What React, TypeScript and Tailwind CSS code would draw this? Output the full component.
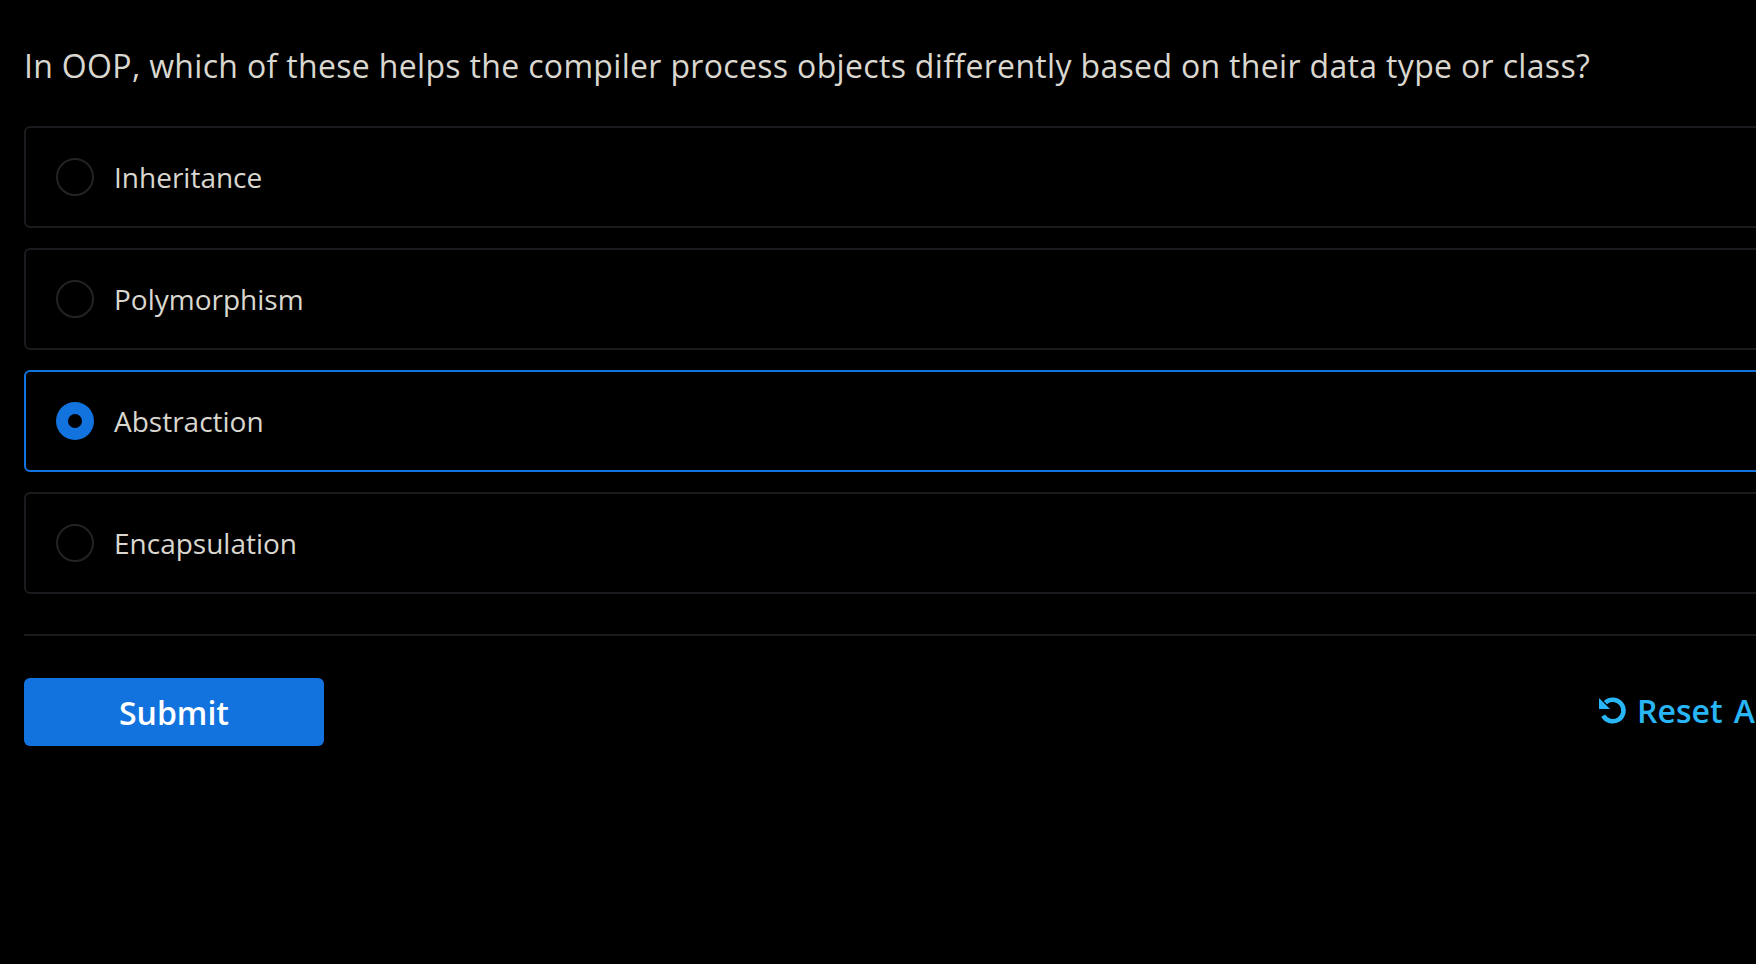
import React from "react";

const options = ["Inheritance", "Polymorphism", "Abstraction", "Encapsulation"];

export default function App() {
  return (
    <div className="h-[964px] w-[1756px] overflow-hidden bg-black font-['Open_Sans',sans-serif]">
      <div className="w-[1900px] pl-6 pr-6 pt-[44px]">
        <p className="text-[32px] leading-[44px] tracking-[0.33px] text-[#d9d7cf]">
          In OOP, which of these helps the compiler process objects differently based on their data type or class?
        </p>
        <div className="mt-[38px] flex flex-col gap-5">
          {options.map((o, i) => {
            const selected = i === 2;
            return (
              <div
                key={o}
                className={`flex h-[102px] items-center rounded-md border-2 pl-[30px] ${selected ? "border-[#1273de]" : "border-[#191b1e]"}`}
              >
                {selected ? (
                  <span className="flex h-[38px] w-[38px] items-center justify-center rounded-full bg-[#1273de]">
                    <span className="h-[14px] w-[14px] rounded-full bg-black" />
                  </span>
                ) : (
                  <span className="h-[38px] w-[38px] rounded-full border-2 border-[#232323]" />
                )}
                <span className="ml-5 text-[28px] leading-[38px] text-[#d9d7cf]">{o}</span>
              </div>
            );
          })}
        </div>
        <div className="mt-[40px] h-[2px] bg-[#191b1e]" />
        <div className="mt-[42px] flex items-center">
          <button className="h-[68px] w-[300px] rounded-md bg-[#1273de] pt-[2px] text-[32px] font-semibold text-white">
            Submit
          </button>
          <div className="mb-[3px] ml-[1275px] flex items-center gap-[10px] text-[32px] font-semibold text-[#29b6f6] [word-spacing:3px]">
            <svg width="28" height="28" viewBox="0 0 28 28" fill="none">
              <path d="M6.4 5.6A10.8 10.8 0 1 1 4.2 18.6" stroke="#29b6f6" strokeWidth="4.5" fill="none" />
              <path d="M0 1v11h11z" fill="#29b6f6" />
            </svg>
            <span>Reset All</span>
          </div>
        </div>
      </div>
    </div>
  );
}
